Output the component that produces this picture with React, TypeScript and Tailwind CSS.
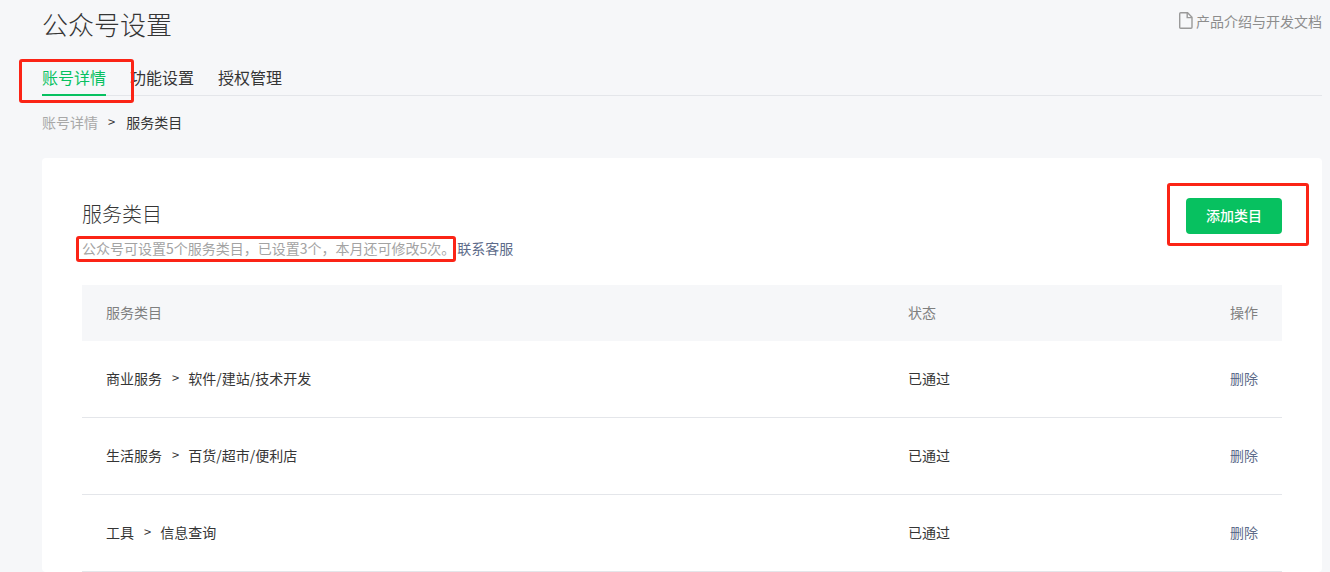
const rows = [
  { path: ["商业服务", "软件/建站/技术开发"], status: "已通过" },
  { path: ["生活服务", "百货/超市/便利店"], status: "已通过" },
  { path: ["工具", "信息查询"], status: "已通过" },
];

function RedBox({ className }: { className: string }) {
  return <div className={`absolute border-[3px] border-[#fb2416] rounded-[3px] pointer-events-none ${className}`} />;
}

function DocIcon() {
  return (
    <svg width="14" height="17" viewBox="0 0 14 17" fill="none" stroke="#9a9a9a" strokeWidth="1.4">
      <path d="M1.7 0.8H8.6L13 5.2V15.2C13 15.8 12.6 16.2 12 16.2H1.7C1.1 16.2 0.7 15.8 0.7 15.2V1.8C0.7 1.2 1.1 0.8 1.7 0.8Z" />
      <path d="M8.2 0.8V5.6H13" />
    </svg>
  );
}

export default function App() {
  return (
    <div
      className="relative h-[572px] w-[1330px] overflow-hidden bg-[#f6f7f9] pl-[42px] pr-2 text-sm text-[#353535]"
      style={{ fontFamily: "'Noto Sans CJK SC', 'Liberation Sans', sans-serif" }}
    >
      <header className="flex h-[59px] items-center justify-between pb-3">
        <h1 className="text-[26px] font-light leading-8 text-[#353535]">公众号设置</h1>
        <a className="mb-[6px] flex items-center gap-[3px] text-[#8d8d8d]">
          <DocIcon />
          产品介绍与开发文档
        </a>
      </header>

      <nav className="flex h-[37px] gap-6 border-b border-[#e4e6ea] text-base leading-[36px]">
        <a className="h-[37px] border-b-2 border-[#07c160] text-[#07c160]">账号详情</a>
        <a>功能设置</a>
        <a>授权管理</a>
      </nav>

      <div className="flex h-[62px] items-center gap-[10px] pb-[10px]">
        <span className="text-[#a8a8a8]">账号详情</span>
        <span className="text-[13px]">&gt;</span>
        <span className="ml-px">服务类目</span>
      </div>

      <main className="rounded bg-white px-10 pt-10">
        <div className="flex items-start justify-between">
          <div>
            <h2 className="text-xl font-light leading-8">服务类目</h2>
            <p className="mt-2 leading-5 text-[#a3a3a3]">
              公众号可设置5个服务类目，已设置3个，本月还可修改5次。
              <a className="ml-[2px] text-[#5d6b8a]">联系客服</a>
            </p>
          </div>
          <button className="h-9 w-24 rounded bg-[#07c160] pb-0.5 text-sm font-medium text-white">添加类目</button>
        </div>

        <div className="mt-[27px]">
          <div className="flex h-14 items-center bg-[#f6f7f9] px-6 pb-0.5 text-[#7f7f7f]">
            <div className="flex-1">服务类目</div>
            <div className="w-[322px]">状态</div>
            <div>操作</div>
          </div>
          {rows.map((row) => (
            <div key={row.path[0]} className="flex h-[77px] items-center border-b border-[#e4e6ea] px-6 pb-0.5">
              <div className="flex flex-1 items-center gap-[10px]">
                <span>{row.path[0]}</span>
                <span className="text-[13px]">&gt;</span>
                <span className="-ml-px">{row.path[1]}</span>
              </div>
              <div className="w-[322px]">{row.status}</div>
              <a className="text-[#5d6b8a]">删除</a>
            </div>
          ))}
        </div>
      </main>

      <RedBox className="left-[19px] top-[59px] h-[44px] w-[115px]" />
      <RedBox className="left-[76px] top-[236px] h-[26px] w-[380px]" />
      <RedBox className="left-[1167px] top-[183px] h-[63px] w-[142px]" />
    </div>
  );
}
